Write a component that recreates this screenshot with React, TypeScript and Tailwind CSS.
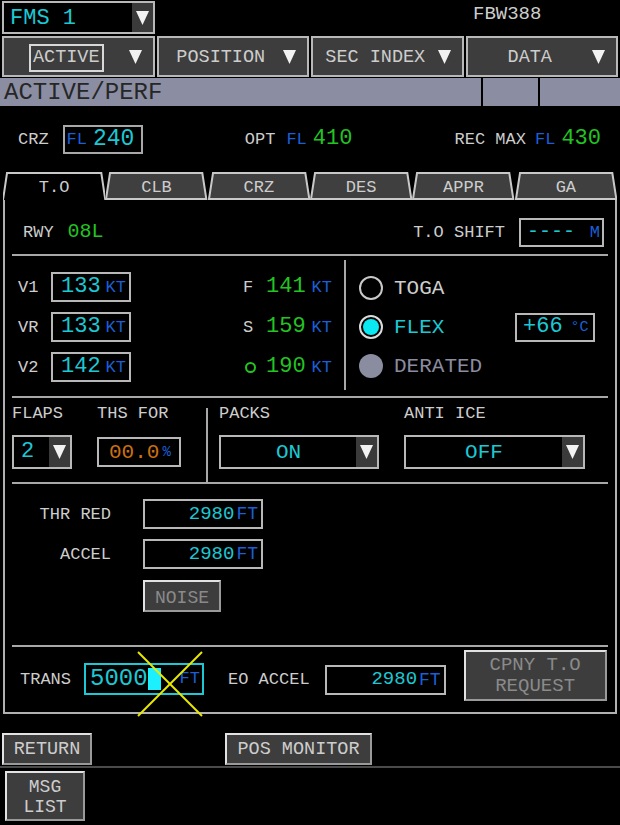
import React from "react";

const LABEL = "text-[#cdcdcd]";
const CYAN = "text-[#1cc8d4]";
const GREEN = "text-[#22c422]";
const BLUE = "text-[#1b5fd6]";

function Arrow() {
    return (
        <svg width="13" height="14" viewBox="0 0 13 14">
            <polygon points="0,0 13,0 6.5,14" fill="#f2f2f2" />
        </svg>
    );
}

// black field with a dark arrow strip on the right
function Dropdown({ value, className, textClass }: { value: string; className: string; textClass: string }) {
    return (
        <div className={`flex bg-black border-2 border-[#b8b8b8] ${className}`}>
            <div className={`flex-1 flex items-center ${textClass}`}>{value}</div>
            <div className="w-[21px] bg-[#3a3a3a] flex items-center justify-center">
                <Arrow />
            </div>
        </div>
    );
}

function MenuButton({ label, boxed }: { label: string; boxed?: boolean }) {
    return (
        <div className="h-[41px] flex items-center bg-[#3d3d3d] border-2 border-[#b8b8b8]">
            <div className="flex-1 flex justify-center pt-[3px]">
                <span className={`text-[18.5px] ${LABEL} ${boxed ? "border-2 border-[#d8d8d8] px-[2px] leading-[24px]" : ""}`}>{label}</span>
            </div>
            <div className="w-[24px] flex justify-start">
                <Arrow />
            </div>
        </div>
    );
}

function Button({ children, className }: { children: React.ReactNode; className: string }) {
    return (
        <div className={`flex items-center justify-center text-center bg-[#3d3d3d] border-2 border-t-[#e2e2e2] border-l-[#e2e2e2] border-b-[#9a9a9a] border-r-[#9a9a9a] ${className}`}>
            {children}
        </div>
    );
}

function SpeedBox({ value }: { value: string }) {
    return (
        <div className="w-[80px] h-[30px] bg-black border-2 border-[#b8b8b8] flex items-center pl-[8px] gap-[5px]">
            <span className={`text-[22px] ${CYAN}`}>{value}</span>
            <span className={`text-[17px] ${BLUE}`}>KT</span>
        </div>
    );
}

function FtBox({ value, className }: { value: string; className: string }) {
    return (
        <div className={`h-[30px] bg-black border-2 border-[#b8b8b8] flex items-center justify-end pr-[3px] gap-[2px] ${className}`}>
            <span className={`text-[19px] ${CYAN}`}>{value}</span>
            <span className={`text-[18px] ${BLUE}`}>FT</span>
        </div>
    );
}

function Tab({ label, active }: { label: string; active?: boolean }) {
    return (
        <div className="relative h-[28px] flex items-center justify-center">
            <svg className="absolute inset-0 w-full h-full" viewBox="0 0 102 28" preserveAspectRatio="none">
                {active ? (
                    <polyline points="0,28 4,1 98,1 102,28" fill="#000" stroke="#c8c8c8" strokeWidth="2" vectorEffect="non-scaling-stroke" />
                ) : (
                    <polygon points="1,27 5,1 97,1 101,27" fill="#3f3f3f" stroke="#c8c8c8" strokeWidth="2" vectorEffect="non-scaling-stroke" />
                )}
            </svg>
            <span className={`relative text-[17px] ${LABEL} pt-[3px]`}>{label}</span>
        </div>
    );
}

function Hr() {
    return <div className="mx-[7px] h-[2px] bg-[#a8a8a8]" />;
}

function SpeedRow({ label, value, tag, tagValue }: { label: string; value: string; tag: React.ReactNode; tagValue: string }) {
    return (
        <div className="h-[30px] flex items-center">
            <span className={`w-[33px] text-[17px] ${LABEL}`}>{label}</span>
            <SpeedBox value={value} />
            <div className="ml-[112px] w-[23px] flex justify-start">{tag}</div>
            <span className={`text-[22px] ${GREEN}`}>{tagValue}</span>
            <span className={`ml-[6px] text-[17px] ${BLUE}`}>KT</span>
        </div>
    );
}

export default function App() {
    return (
        <div className="w-[620px] h-[825px] bg-black overflow-hidden font-['Liberation_Mono',monospace] leading-none">
            {/* Top line */}
            <div className="h-[36px] flex items-start">
                <Dropdown value="FMS 1" className="mt-[1px] ml-[2px] w-[153px] h-[33px]" textClass={`pl-[6px] pt-[2px] text-[22px] ${CYAN}`} />
                <span className={`ml-[318px] mt-[5px] text-[19px] ${LABEL}`}>FBW388</span>
            </div>

            {/* Menu */}
            <div className="grid grid-cols-4 gap-[2px] px-[2px]">
                <MenuButton label="ACTIVE" boxed />
                <MenuButton label="POSITION" />
                <MenuButton label="SEC INDEX" />
                <MenuButton label="DATA" />
            </div>

            {/* Title */}
            <div className="h-[28px] mt-[1px] flex bg-[#8b8ea3]">
                <div className="flex-1 flex items-center pl-[4px] pt-[2px] text-[24px] text-[#262626]">ACTIVE/PERF</div>
                <div className="w-[2px] bg-black" />
                <div className="w-[55px]" />
                <div className="w-[2px] bg-black" />
                <div className="w-[80px]" />
            </div>

            {/* Cruise levels */}
            <div className="h-[66px] flex items-center justify-between pl-[18px] pr-[19px]">
                <div className="flex items-center">
                    <span className={`text-[17px] ${LABEL}`}>CRZ</span>
                    <div className="ml-[14px] w-[80px] h-[29px] border-2 border-[#a8a8a8] flex items-center pl-[2px] gap-[6px]">
                        <span className={`text-[17px] ${BLUE}`}>FL</span>
                        <span className={`text-[23px] ${CYAN}`}>240</span>
                    </div>
                </div>
                <div className="flex items-center">
                    <span className={`text-[17px] ${LABEL}`}>OPT</span>
                    <span className={`ml-[11px] text-[17px] ${BLUE}`}>FL</span>
                    <span className={`ml-[6px] text-[22px] ${GREEN}`}>410</span>
                </div>
                <div className="flex items-center">
                    <span className={`text-[17px] ${LABEL}`}>REC MAX</span>
                    <span className={`ml-[9px] text-[17px] ${BLUE}`}>FL</span>
                    <span className={`ml-[6px] text-[22px] ${GREEN}`}>430</span>
                </div>
            </div>

            {/* Tabs */}
            <div className="ml-[3px] w-[614px] grid grid-cols-6">
                <Tab label="T.O" active />
                <Tab label="CLB" />
                <Tab label="CRZ" />
                <Tab label="DES" />
                <Tab label="APPR" />
                <Tab label="GA" />
            </div>

            {/* Panel */}
            <div className="ml-[3px] w-[614px] h-[514px] border-2 border-t-0 border-[#b0b0b0] flex flex-col">
                {/* Runway */}
                <div className="h-[54px] pt-[10px] flex items-center pl-[18px] pr-[11px]">
                    <span className={`text-[17px] ${LABEL}`}>RWY</span>
                    <span className={`ml-[14px] text-[20px] ${GREEN}`}>08L</span>
                    <span className={`ml-auto text-[17px] ${LABEL}`}>T.O SHIFT</span>
                    <div className="ml-[14px] w-[85px] h-[29px] border-2 border-[#b8b8b8] flex items-center justify-between pl-[6px] pr-[2px]">
                        <span className={`text-[20px] ${CYAN}`}>----</span>
                        <span className={`text-[17px] ${BLUE}`}>M</span>
                    </div>
                </div>
                <Hr />

                {/* Speeds and thrust mode */}
                <div className="h-[140px] flex">
                    <div className="w-[339px] flex flex-col gap-[10px] pt-[16px] pl-[13px]">
                        <SpeedRow label="V1" value="133" tag={<span className={`text-[17px] ${LABEL}`}>F</span>} tagValue="141" />
                        <SpeedRow label="VR" value="133" tag={<span className={`text-[17px] ${LABEL}`}>S</span>} tagValue="159" />
                        <SpeedRow
                            label="V2"
                            value="142"
                            tag={<div className="ml-[2px] w-[11px] h-[11px] rounded-full border-2 border-[#22c422]" />}
                            tagValue="190"
                        />
                    </div>
                    <div className="w-[2px] mt-[4px] h-[130px] bg-[#a8a8a8]" />
                    <div className="flex-1 flex flex-col gap-[9px] pt-[17px] pl-[13px] pr-[20px]">
                        <div className="h-[30px] flex items-center gap-[11px]">
                            <div className="w-[24px] h-[24px] rounded-full border-2 border-[#c8c8c8] bg-black" />
                            <span className={`text-[21px] ${LABEL}`}>TOGA</span>
                        </div>
                        <div className="h-[30px] flex items-center gap-[11px]">
                            <div className="w-[24px] h-[24px] rounded-full border-2 border-[#dcdcdc] bg-black flex items-center justify-center">
                                <div className="w-[16px] h-[16px] rounded-full bg-[#0ae8f2]" />
                            </div>
                            <span className={`text-[21px] ${CYAN}`}>FLEX</span>
                            <div className="ml-auto w-[80px] h-[29px] border-2 border-[#b8b8b8] flex items-center pl-[6px] gap-[8px]">
                                <span className={`text-[22px] ${CYAN}`}>+66</span>
                                <span className={`text-[15px] ${BLUE}`}>°C</span>
                            </div>
                        </div>
                        <div className="h-[30px] flex items-center gap-[11px]">
                            <div className="w-[24px] h-[24px] rounded-full bg-[#8a8ca0]" />
                            <span className="text-[21px] text-[#8a8ca0]">DERATED</span>
                        </div>
                    </div>
                </div>
                <Hr />

                {/* Flaps, ths, packs, anti ice */}
                <div className="h-[84px] flex">
                    <div className="w-[92px] pl-[7px] pt-[6px] flex flex-col gap-[11px]">
                        <span className={`text-[17px] leading-[20px] ${LABEL}`}>FLAPS</span>
                        <Dropdown value="2" className="w-[60px] h-[34px]" textClass={`pl-[7px] text-[22px] ${CYAN}`} />
                    </div>
                    <div className="w-[109px] pt-[6px] flex flex-col gap-[11px]">
                        <span className={`text-[17px] leading-[20px] ${LABEL}`}>THS FOR</span>
                        <div className="mt-[2px] w-[84px] h-[30px] border-2 border-[#b8b8b8] flex items-center pl-[10px] gap-[3px]">
                            <span className="text-[21px] text-[#cc7010]">00.0</span>
                            <span className={`text-[14px] ${BLUE}`}>%</span>
                        </div>
                    </div>
                    <div className="w-[2px] mt-[10px] h-[74px] bg-[#a8a8a8]" />
                    <div className="w-[196px] pl-[11px] pt-[6px] flex flex-col gap-[11px]">
                        <span className={`text-[17px] leading-[20px] ${LABEL}`}>PACKS</span>
                        <Dropdown value="ON" className="w-[160px] h-[34px]" textClass={`justify-center text-[21px] ${CYAN}`} />
                    </div>
                    <div className="flex-1 pt-[6px] flex flex-col gap-[11px]">
                        <span className={`text-[17px] leading-[20px] ${LABEL}`}>ANTI ICE</span>
                        <Dropdown value="OFF" className="w-[181px] h-[34px]" textClass={`justify-center text-[21px] ${CYAN}`} />
                    </div>
                </div>
                <Hr />

                {/* Altitudes */}
                <div className="h-[161px] pt-[15px] flex flex-col gap-[10px]">
                    <div className="flex items-center">
                        <span className={`w-[106px] text-right text-[17px] ${LABEL}`}>THR RED</span>
                        <FtBox value="2980" className="ml-[32px] w-[120px]" />
                    </div>
                    <div className="flex items-center">
                        <span className={`w-[106px] text-right text-[17px] ${LABEL}`}>ACCEL</span>
                        <FtBox value="2980" className="ml-[32px] w-[120px]" />
                    </div>
                    <div className="flex items-center">
                        <Button className="ml-[138px] mt-[1px] w-[78px] h-[32px] pt-[3px]">
                            <span className="text-[18px] text-[#8a8a8a]">NOISE</span>
                        </Button>
                    </div>
                </div>
                <Hr />

                {/* Transition */}
                <div className="flex-1 flex items-center pl-[15px]">
                    <span className={`text-[17px] ${LABEL}`}>TRANS</span>
                    <div className="relative ml-[13px] mt-[-2px] w-[120px] h-[32px] border-2 border-[#1cc8d4] flex items-center pl-[4px]">
                        <span className={`text-[24px] ${CYAN}`}>5000</span>
                        <div className="w-[13px] h-[22px] bg-[#1cf0ff]" />
                        <span className={`ml-auto pr-[2px] text-[17px] ${BLUE}`}>FT</span>
                        <svg className="absolute left-[51px] top-[-14px]" width="66" height="66" viewBox="0 0 66 66">
                            <line x1="1" y1="1" x2="65" y2="65" stroke="#e8e800" strokeWidth="2" />
                            <line x1="65" y1="1" x2="1" y2="65" stroke="#e8e800" strokeWidth="2" />
                        </svg>
                    </div>
                    <span className={`ml-[24px] text-[17px] ${LABEL}`}>EO ACCEL</span>
                    <FtBox value="2980" className="ml-[15px] w-[121px]" />
                    <Button className="ml-[18px] mt-[-8px] w-[143px] h-[51px]">
                        <span className="text-[19px] leading-[21px] text-[#8a8a8a]">
                            CPNY T.O
                            <br />
                            REQUEST
                        </span>
                    </Button>
                </div>
            </div>

            {/* Footer */}
            <div className="mt-[19px] h-[33px] flex items-start">
                <Button className="ml-[2px] w-[90px] h-[32px] pt-[3px]">
                    <span className={`text-[18.5px] ${LABEL}`}>RETURN</span>
                </Button>
                <Button className="ml-[133px] w-[147px] h-[32px] pt-[3px]">
                    <span className={`text-[18.5px] ${LABEL}`}>POS MONITOR</span>
                </Button>
            </div>
            <div className="h-[2px] bg-[#4a4a4a]" />
            <Button className="mt-[3px] ml-[5px] w-[80px] h-[50px] pt-[2px]">
                <span className={`text-[18px] leading-[20px] ${LABEL}`}>
                    MSG
                    <br />
                    LIST
                </span>
            </Button>
        </div>
    );
}
